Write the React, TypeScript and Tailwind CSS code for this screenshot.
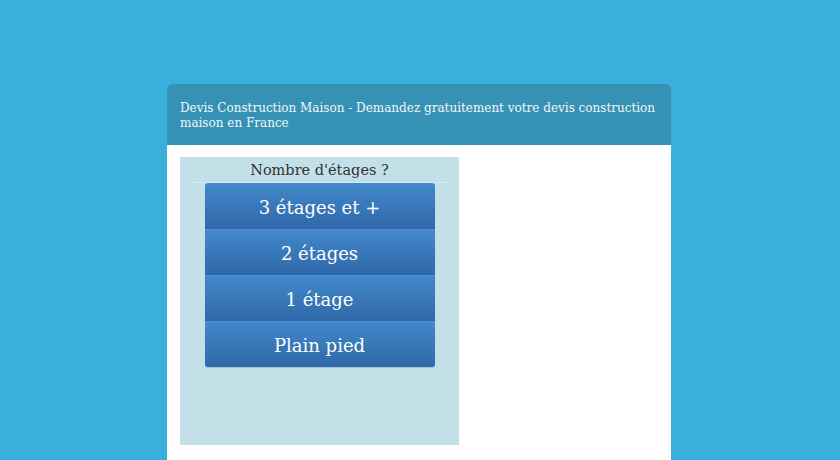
import React from 'react';

const options = ['3 étages et +', '2 étages', '1 étage', 'Plain pied'];

const App = () => {
  return (
    <div className="h-[460px] overflow-hidden bg-[#39afdc] pt-[84px]">
      <div className="ml-[167px] w-[504px] rounded-t-[4px] bg-white">
        {/* Header */}
        <div className="h-[61px] rounded-t-[4px] bg-[#3592b4] pl-[13px] pr-[8px] pt-[17px]">
          <h1 className="font-['DejaVu_Serif',serif] text-[12px] leading-[15px] text-[#f3f8fa]">
            Devis Construction Maison - Demandez gratuitement votre devis construction maison en France
          </h1>
        </div>

        {/* Body */}
        <div className="px-[13px] pt-[12px] pb-[20px]">
          <div className="flex h-[288px] w-[279px] flex-col items-center bg-[#c3e0e8]">
            <div className="w-full px-[10px]">
              <p className="border-b border-[#d8ecf1] pt-[2px] text-center font-['DejaVu_Serif',serif] text-[14.5px] leading-[23px] text-[#333]">
                Nombre d'étages ?
              </p>
            </div>
            <div className="w-[230px] overflow-hidden rounded-[3px] shadow-[0_1px_1px_rgba(0,0,0,0.15)]">
              {options.map((o, i) => (
                <button
                  key={o}
                  className={`block h-[46px] w-full bg-gradient-to-b from-[#4289cb] to-[#3068a8] pt-[2px] text-center font-['DejaVu_Serif',serif] text-[18px] text-white ${i > 0 ? 'border-t border-[#4a8fcf]' : ''}`}
                >
                  {o}
                </button>
              ))}
            </div>
          </div>
        </div>
      </div>
    </div>
  );
};

export default App;
